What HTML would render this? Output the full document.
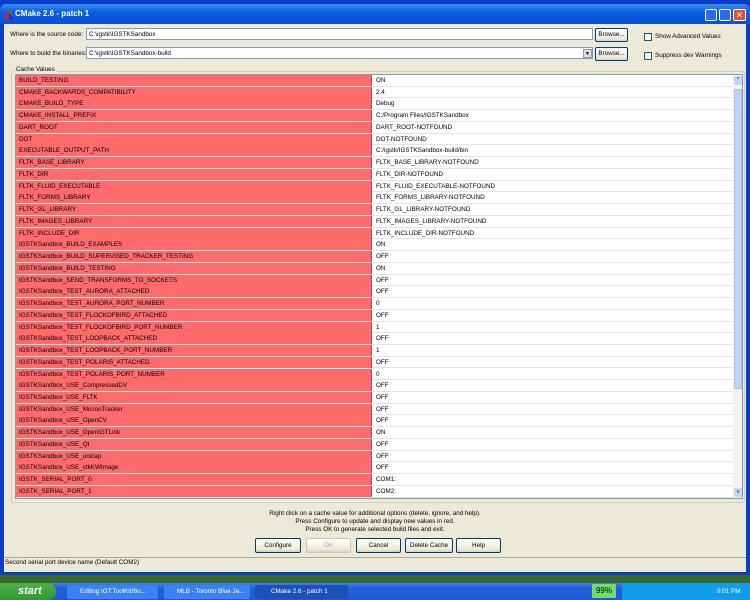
<!DOCTYPE html>
<html><head><style>
*{margin:0;padding:0;box-sizing:border-box}
html,body{width:750px;height:600px;overflow:hidden}
body{position:relative;background:#3a6a2a;font-family:"Liberation Sans",sans-serif;font-size:6.3px;color:#000}
.a{position:absolute;white-space:nowrap}
.win{left:0;top:0;width:750px;height:575px;background:#0a3ec8}
.title{left:0;top:4px;width:750px;height:20px;background:linear-gradient(#3b8cf5,#0a5fe0 40%,#0850d8);border-radius:6px 6px 0 0}
.client{left:4px;top:24px;width:742px;height:548px;background:#ece9d8}
.inp{background:#fff;border:1px solid #7f9db9;height:12px;padding:2px 2px;line-height:8px;overflow:hidden}
.btn{background:linear-gradient(#fff,#ece9d8 80%,#d6d0c0);border:1px solid #003c74;border-radius:2px;text-align:center;line-height:13px;height:15px}
.row{position:absolute;left:16px;width:717px;height:11.74px;border-bottom:1px solid #e4e4e4;background:#fff}
.row .k{position:absolute;left:0;top:0;width:356px;height:11px;background:#ff6b6b;border-right:1px solid #c04848;padding-left:3px;line-height:11px;white-space:nowrap}
.row .v{position:absolute;left:360px;top:0;line-height:11px;white-space:nowrap}
.cb{width:8px;height:8px;border:1px solid #1c5180;background:#fff}
.task{top:585px;height:14px;border-radius:2px;color:#fff;line-height:14px;overflow:hidden}
</style></head><body>
<div class="a win"></div>
<div class="a title"></div>
<svg class="a" style="left:4px;top:9px" width="10" height="10"><polygon points="5,0 10,10 0,10" fill="#2a2"/><polygon points="5,0 7,10 0,10" fill="#d22"/><polygon points="5,4 10,10 5,10" fill="#22c"/></svg>
<div class="a" style="left:15px;top:9px;color:#fff;font-size:8px;font-weight:bold">CMake 2.6 - patch 1</div>
<div class="a" style="left:705px;top:9px;width:12px;height:12px;background:#2a6af0;border:1px solid #fff;border-radius:2px"></div>
<div class="a" style="left:719px;top:9px;width:12px;height:12px;background:#2a6af0;border:1px solid #fff;border-radius:2px"></div>
<div class="a" style="left:733px;top:9px;width:13px;height:12px;background:#e0502a;border:1px solid #fff;border-radius:2px;color:#fff;font-size:9px;line-height:10px;text-align:center">✕</div>
<div class="a client"></div>
<div class="a" style="left:10px;top:31px">Where is the source code:</div>
<div class="a inp" style="left:86px;top:28px;width:507px">C:\igstk\IGSTKSandbox</div>
<div class="a btn" style="left:595px;top:28px;width:33px;height:14px;line-height:12px">Browse...</div>
<div class="a cb" style="left:644px;top:33px"></div>
<div class="a" style="left:655px;top:33px">Show Advanced Values</div>
<div class="a" style="left:10px;top:50px">Where to build the binaries:</div>
<div class="a inp" style="left:86px;top:47px;width:507px">C:\igstk\IGSTKSandbox-build</div>
<div class="a" style="left:583px;top:49px;width:9px;height:9px;background:#ddd;border:1px solid #999;font-size:5px;text-align:center;line-height:8px">▼</div>
<div class="a btn" style="left:595px;top:47px;width:33px;height:14px;line-height:12px">Browse...</div>
<div class="a cb" style="left:644px;top:52px"></div>
<div class="a" style="left:655px;top:52px">Suppress dev Warnings</div>
<div class="a" style="left:11px;top:71px;width:734px;height:432px;border:1px solid #d0d0bf;border-radius:3px"></div>
<div class="a" style="left:15px;top:66px;background:#ece9d8;padding:0 1px">Cache Values</div>
<div class="a" style="left:15px;top:74px;width:728px;height:425px;background:#fff;border:1px solid #7f9db9"></div>
<div id="rows"></div>
<div class="a" style="left:733px;top:75px;width:9px;height:423px;background:#f4f3ee"></div>
<div class="a" style="left:734px;top:76px;width:8px;height:9px;background:#c5d6fb;border-radius:1px;font-size:5px;text-align:center;line-height:9px">^</div>
<div class="a" style="left:734px;top:89px;width:8px;height:300px;background:#c2d3fc;border:1px solid #a8bdf2;border-radius:1px"></div>
<div class="a" style="left:734px;top:488px;width:8px;height:9px;background:#c5d6fb;border-radius:1px;font-size:5px;text-align:center;line-height:9px">v</div>
<div class="a" style="left:0;top:510px;width:750px;text-align:center;line-height:8px">Right click on a cache value for additional options (delete, ignore, and help).<br>Press Configure to update and display new values in red.<br>Press OK to generate selected build files and exit.</div>
<div class="a btn" style="left:255px;top:538px;width:46px">Configure</div>
<div class="a btn" style="left:306px;top:538px;width:45px;color:#aaa;border-color:#c9c7ba">OK</div>
<div class="a btn" style="left:356px;top:538px;width:45px">Cancel</div>
<div class="a btn" style="left:405px;top:538px;width:48px">Delete Cache</div>
<div class="a btn" style="left:456px;top:538px;width:45px">Help</div>
<div class="a" style="left:4px;top:557px;width:742px;border-top:1px solid #aca899"></div>
<div class="a" style="left:5px;top:559px">Second serial port device name (Default COM2)</div>
<div class="a" style="left:0;top:583px;width:750px;height:17px;background:linear-gradient(#3c81f3,#245edb 30%,#1f58d6)"></div>
<div class="a" style="left:0;top:583px;width:56px;height:17px;background:linear-gradient(#4eb04a,#2f9a32);border-radius:0 8px 8px 0;color:#fff;font-style:italic;font-weight:bold;font-size:11px;padding-left:18px;line-height:17px">start</div>
<div class="a task" style="left:67px;width:91px;background:#3c81f3;padding-left:13px">Editing IGT:ToolKit/Bu...</div>
<div class="a task" style="left:164px;width:86px;background:#3c81f3;padding-left:13px">MLB - Toronto Blue Ja...</div>
<div class="a task" style="left:255px;width:93px;background:#1e4fb8;padding-left:16px">CMake 2.6 - patch 1</div>
<div class="a" style="left:622px;top:583px;width:128px;height:17px;background:#0f9ce8"></div>
<div class="a" style="left:592px;top:584px;width:24px;height:14px;background:#6ee06a;font-size:8px;text-align:center;line-height:14px">99%</div>
<div class="a" style="left:717px;top:588px;color:#fff">9:01 PM</div>
<script>
var d=[["BUILD_TESTING","ON"],["CMAKE_BACKWARDS_COMPATIBILITY","2.4"],["CMAKE_BUILD_TYPE","Debug"],["CMAKE_INSTALL_PREFIX","C:/Program Files/IGSTKSandbox"],["DART_ROOT","DART_ROOT-NOTFOUND"],["DOT","DOT-NOTFOUND"],["EXECUTABLE_OUTPUT_PATH","C:/igstk/IGSTKSandbox-build/bin"],["FLTK_BASE_LIBRARY","FLTK_BASE_LIBRARY-NOTFOUND"],["FLTK_DIR","FLTK_DIR-NOTFOUND"],["FLTK_FLUID_EXECUTABLE","FLTK_FLUID_EXECUTABLE-NOTFOUND"],["FLTK_FORMS_LIBRARY","FLTK_FORMS_LIBRARY-NOTFOUND"],["FLTK_GL_LIBRARY","FLTK_GL_LIBRARY-NOTFOUND"],["FLTK_IMAGES_LIBRARY","FLTK_IMAGES_LIBRARY-NOTFOUND"],["FLTK_INCLUDE_DIR","FLTK_INCLUDE_DIR-NOTFOUND"],["IGSTKSandbox_BUILD_EXAMPLES","ON"],["IGSTKSandbox_BUILD_SUPERVISED_TRACKER_TESTING","OFF"],["IGSTKSandbox_BUILD_TESTING","ON"],["IGSTKSandbox_SEND_TRANSFORMS_TO_SOCKETS","OFF"],["IGSTKSandbox_TEST_AURORA_ATTACHED","OFF"],["IGSTKSandbox_TEST_AURORA_PORT_NUMBER","0"],["IGSTKSandbox_TEST_FLOCKOFBIRD_ATTACHED","OFF"],["IGSTKSandbox_TEST_FLOCKOFBIRD_PORT_NUMBER","1"],["IGSTKSandbox_TEST_LOOPBACK_ATTACHED","OFF"],["IGSTKSandbox_TEST_LOOPBACK_PORT_NUMBER","1"],["IGSTKSandbox_TEST_POLARIS_ATTACHED","OFF"],["IGSTKSandbox_TEST_POLARIS_PORT_NUMBER","0"],["IGSTKSandbox_USE_CompressedDV","OFF"],["IGSTKSandbox_USE_FLTK","OFF"],["IGSTKSandbox_USE_MicronTracker","OFF"],["IGSTKSandbox_USE_OpenCV","OFF"],["IGSTKSandbox_USE_OpenIGTLink","ON"],["IGSTKSandbox_USE_Qt","OFF"],["IGSTKSandbox_USE_unicap","OFF"],["IGSTKSandbox_USE_vtkKWImage","OFF"],["IGSTK_SERIAL_PORT_0","COM1:"],["IGSTK_SERIAL_PORT_1","COM2:"]];
var h="";d.forEach(function(r,i){h+='<div class="row" style="top:'+(75+i*11.74)+'px"><div class="k">'+r[0]+'</div><div class="v">'+r[1]+'</div></div>';});
document.getElementById("rows").innerHTML=h;
</script>
</body></html>
